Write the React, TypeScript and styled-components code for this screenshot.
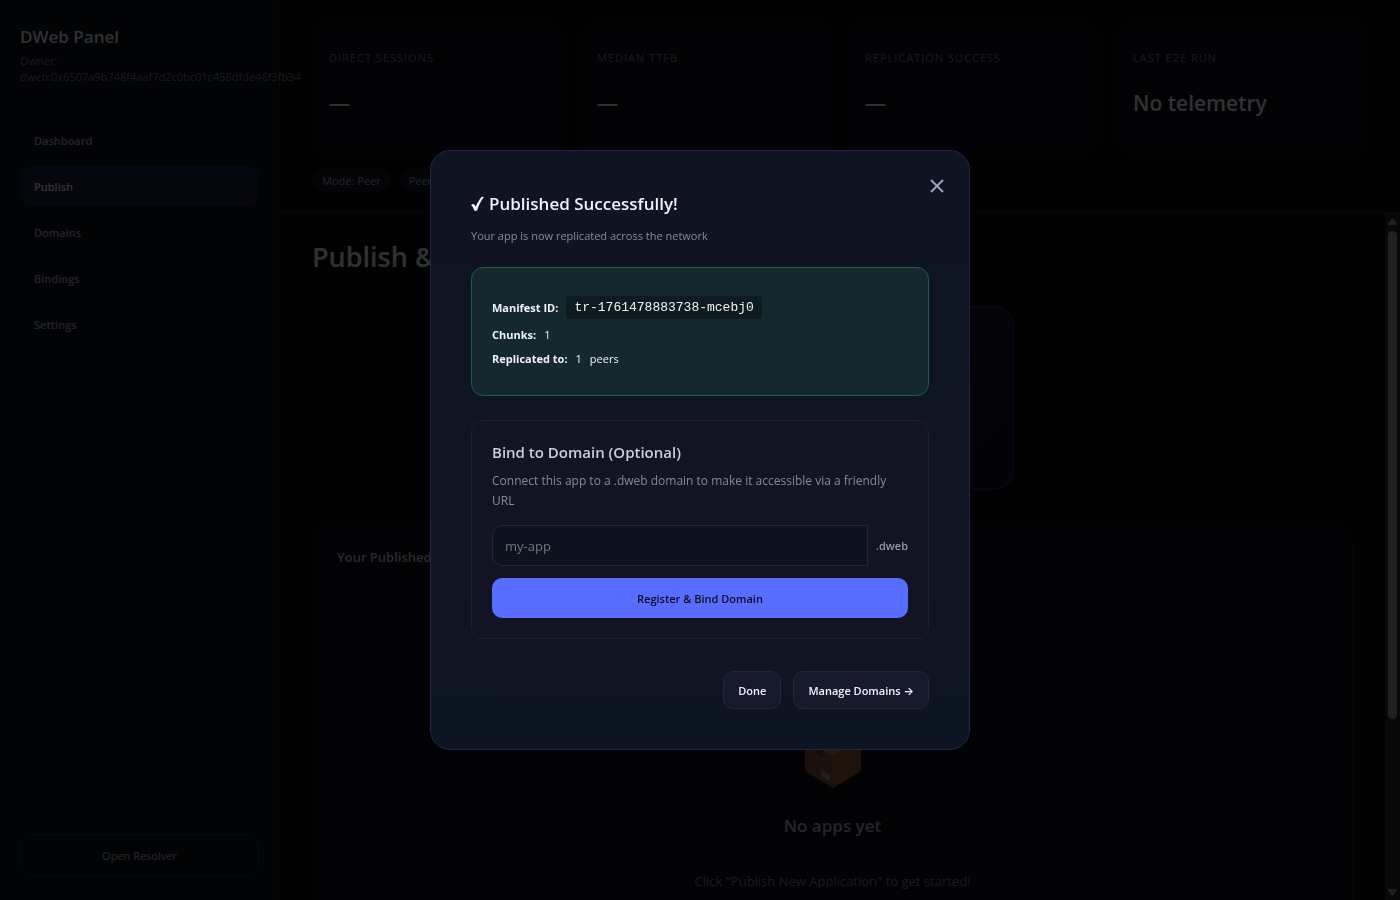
import React from 'react';
import styled, { createGlobalStyle } from 'styled-components';

const GlobalStyle = createGlobalStyle`
  *, *::before, *::after { box-sizing: border-box; }
  body {
    margin: 0;
    background: #05050a;
    color: #f0f2fa;
    font-family: 'Open Sans', 'Noto Sans', sans-serif;
    font-size: 11px;
  }
  h1, h2, h3, p, dl, dd, dt { margin: 0; }
  button, input { font-family: inherit; }
`;

const Shell = styled.div`
  display: flex;
  height: 100vh;
  overflow: hidden;
`;

const Sidebar = styled.aside`
  display: flex;
  flex-direction: column;
  flex: 0 0 280px;
  min-width: 0;
  padding: 24px 20px;
  background: #0a0f19;
  border-right: 1px solid #1b1e2b;
`;

const Brand = styled.h2`
  font-size: 17px;
  line-height: 26px;
  font-weight: 600;
`;

const Owner = styled.p`
  margin-top: 3px;
  font-size: 11px;
  line-height: 16px;
  color: #82869c;
  white-space: nowrap;
  position: relative;
  z-index: 1;
`;

const Nav = styled.nav`
  display: flex;
  flex-direction: column;
  gap: 6px;
  margin-top: 35px;
`;

const NavItem = styled.a<{ $active?: boolean }>`
  padding: 1px 14px 0;
  border-radius: 12px;
  font-size: 11px;
  line-height: 39px;
  font-weight: 600;
  text-decoration: none;
  color: ${(p) => (p.$active ? '#eef0fa' : '#b4b8ca')};
  background: ${(p) => (p.$active ? '#1f1f4a' : 'transparent')};
`;

const ResolverButton = styled.button`
  height: 42px;
  margin-top: auto;
  border: 1px solid #282e42;
  border-radius: 12px;
  background: transparent;
  color: #c5c9da;
  font-size: 11px;
`;

const Main = styled.main`
  display: flex;
  flex-direction: column;
  flex: 1;
  min-width: 0;
`;

const TopBar = styled.header`
  padding: 20px 32px;
  border-bottom: 1px solid #1b1e2b;
`;

const Stats = styled.div`
  display: grid;
  grid-template-columns: repeat(4, minmax(0, 1fr));
  gap: 16px;
`;

const StatCard = styled.section`
  height: 136px;
  padding: 28px 16px;
  border: 1px solid #171b28;
  border-radius: 16px;
  background: #0a0d1a;
`;

const StatLabel = styled.h3`
  font-size: 11px;
  line-height: 18px;
  font-weight: 400;
  letter-spacing: 1px;
  text-transform: uppercase;
  color: #82869c;
`;

const StatValue = styled.p`
  margin-top: 20px;
  font-size: 21px;
  line-height: 32px;
  font-weight: 600;
`;

const Pills = styled.div`
  display: flex;
  gap: 8px;
  margin-top: 12px;
`;

const Pill = styled.span`
  padding: 1px 10px 0;
  border-radius: 12px;
  line-height: 23px;
  background: #10141f;
  color: #b4b8ca;
`;

const Scroller = styled.div`
  display: flex;
  flex: 1;
  min-height: 0;
`;

const Content = styled.div`
  flex: 1;
  min-width: 0;
  padding: 24px 32px;
  overflow: hidden;
`;

const PageTitle = styled.h1`
  font-size: 27px;
  line-height: 40px;
  font-weight: 600;
`;

const UploadCard = styled.section`
  width: 363px;
  height: 184px;
  margin: 29px auto 32px;
  border: 2px solid #1e2350;
  border-radius: 20px;
  background: linear-gradient(135deg, #0f1330, #0f1126);
`;

const AppsPanel = styled.section`
  height: 480px;
  padding: 24px;
  border: 1px solid #171b28;
  border-radius: 20px;
  background: #0a0d18;
`;

const PanelTitle = styled.h2`
  font-size: 13px;
  line-height: 20px;
  font-weight: 600;
  color: #c9cddb;
`;

const Empty = styled.div`
  display: flex;
  flex-direction: column;
  align-items: center;
  margin-top: 157px;
`;

const EmptyTitle = styled.h3`
  margin-top: 26px;
  font-size: 17px;
  line-height: 24px;
  font-weight: 600;
  color: #b4b8ca;
`;

const EmptyText = styled.p`
  margin-top: 33px;
  font-size: 13px;
  line-height: 20px;
  color: #82869c;
`;

const ScrollTrack = styled.div`
  display: flex;
  flex-direction: column;
  align-items: center;
  flex: 0 0 15px;
  padding: 5px 0 4px;
  background: #2b2b2b;
`;

const ScrollThumb = styled.div`
  width: 9px;
  height: 72%;
  margin: 6px 0 auto;
  border-radius: 5px;
  background: #9f9f9f;
`;

const Backdrop = styled.div`
  position: fixed;
  inset: 0;
  z-index: 10;
  display: flex;
  align-items: center;
  justify-content: center;
  background: rgba(0, 0, 0, 0.8);
`;

const Dialog = styled.section`
  position: relative;
  width: 540px;
  max-width: 90%;
  padding: 40px;
  border: 1px solid #20273f;
  border-radius: 20px;
  background: linear-gradient(180deg, #101422, #0e1522);
`;

const CloseButton = styled.button`
  position: absolute;
  top: 23px;
  right: 20px;
  display: flex;
  padding: 5px;
  border: 0;
  background: none;
  color: #9ca1b8;
`;

const DialogTitle = styled.h2`
  display: flex;
  align-items: center;
  gap: 5px;
  font-size: 17px;
  line-height: 26px;
  font-weight: 600;
`;

const DialogText = styled.p`
  margin: 10px 0 22px;
  font-size: 11px;
  line-height: 18px;
  color: #8589a0;
`;

const Receipt = styled.dl`
  padding: 28px 20px 24px;
  border: 1px solid #1d5f45;
  border-radius: 12px;
  background: #14282d;
`;

const ReceiptRow = styled.div`
  display: flex;
  align-items: center;
  gap: 8px;
  line-height: 24px;

  &:first-child {
    margin-bottom: 4px;
    line-height: 23px;
  }
`;

const Term = styled.dt`
  font-weight: 700;
`;

const ManifestId = styled.code`
  display: block;
  padding: 0 8px;
  border-radius: 4px;
  background: #0e1c20;
  font-family: 'Liberation Mono', monospace;
  font-size: 13px;
`;

const BindCard = styled.form`
  margin-top: 24px;
  padding: 20px;
  border: 1px solid #1c2034;
  border-radius: 12px;
  background: #121423;
`;

const BindTitle = styled.h3`
  font-size: 15px;
  line-height: 22px;
  font-weight: 600;
  color: #c9cee0;
`;

const BindText = styled.p`
  margin: 8px 0 14px;
  font-size: 12px;
  line-height: 20px;
  color: #8589a0;
`;

const DomainRow = styled.div`
  display: flex;
  align-items: center;
  gap: 8px;
`;

const DomainInput = styled.input`
  flex: 1;
  min-width: 0;
  height: 41px;
  padding: 0 12px;
  border: 1px solid #20273c;
  border-radius: 10px 0 0 10px;
  background: #0c121e;
  color: #f0f2fa;
  font-size: 13px;

  &::placeholder { color: #757575; }
`;

const Suffix = styled.label`
  font-weight: 600;
  color: #9297ad;
`;

const PrimaryButton = styled.button`
  width: 100%;
  height: 40px;
  margin-top: 12px;
  border: 0;
  border-radius: 10px;
  background: #586cff;
  color: #0a0d1a;
  font-size: 11px;
  font-weight: 600;
`;

const Actions = styled.div`
  display: flex;
  justify-content: flex-end;
  gap: 12px;
  margin-top: 32px;
`;

const GhostButton = styled.button`
  height: 38px;
  padding: 0 14px;
  border: 1px solid #23283d;
  border-radius: 10px;
  background: #171a2c;
  color: #f0f2fa;
  font-family: 'Open Sans', Inter, sans-serif;
  font-size: 11px;
  font-weight: 600;
`;

const navItems = ['Dashboard', 'Publish', 'Domains', 'Bindings', 'Settings'];

const stats = [
  { label: 'Direct Sessions', value: '—' },
  { label: 'Median TTFB', value: '—' },
  { label: 'Replication Success', value: '—' },
  { label: 'Last E2E Run', value: 'No telemetry' },
];

const BoxIcon = () => (
  <svg width="56" height="64" viewBox="0 0 56 64" aria-hidden="true">
    <path d="M0 16 28 1l28 15-28 17z" fill="#a87c4c" />
    <path d="M0 16l28 17v31L0 47z" fill="#85543f" />
    <path d="M56 16 28 33v31l28-17z" fill="#94623a" />
    <path d="M10 20 38 6l7 4-27 15z" fill="#b98f5c" />
    <path d="M10 20l8 5v9l-8-5z" fill="#603a34" />
    <path d="M16 46l9 5v6l-9-5z" fill="#a8909a" />
  </svg>
);

const CheckIcon = () => (
  <svg width="13" height="16" viewBox="0 0 13 16" aria-hidden="true">
    <path
      d="M0 9.200c1.200-1.300 2.900-1.500 3.600-.4l1.100 2C6.400 6.800 8.400 3.200 10.800.8L13 1C9.900 5 7.500 9.700 6.200 14.200c-.8 1.100-2.600 1.100-3.100 0C2.300 11.700 1.500 10 0 9.200z"
      fill="currentColor"
    />
  </svg>
);

export default function App() {
  return (
    <>
      <GlobalStyle />
      <Shell>
        <Sidebar>
          <Brand>DWeb Panel</Brand>
          <Owner>
            Owner:
            <br />
            dweb:0x6507a9b748f4aaf7d2c0bc01c456dfde46f3fb34
          </Owner>
          <Nav>
            {navItems.map((item) => (
              <NavItem key={item} href={`#${item.toLowerCase()}`} $active={item === 'Publish'}>
                {item}
              </NavItem>
            ))}
          </Nav>
          <ResolverButton type="button">Open Resolver</ResolverButton>
        </Sidebar>
        <Main>
          <TopBar>
            <Stats>
              {stats.map((s) => (
                <StatCard key={s.label}>
                  <StatLabel>{s.label}</StatLabel>
                  <StatValue>{s.value}</StatValue>
                </StatCard>
              ))}
            </Stats>
            <Pills>
              <Pill>Mode: Peer</Pill>
              <Pill>Peers</Pill>
            </Pills>
          </TopBar>
          <Scroller>
            <Content>
              <PageTitle>Publish &amp;</PageTitle>
              <UploadCard />
              <AppsPanel>
                <PanelTitle>Your Published</PanelTitle>
                <Empty>
                  <BoxIcon />
                  <EmptyTitle>No apps yet</EmptyTitle>
                  <EmptyText>Click "Publish New Application" to get started!</EmptyText>
                </Empty>
              </AppsPanel>
            </Content>
            <ScrollTrack>
              <svg width="9" height="7" viewBox="0 0 9 7" aria-hidden="true">
                <path d="M4.500 0 9 5.500V7H0V5.500z" fill="#9f9f9f" />
              </svg>
              <ScrollThumb />
              <svg width="9" height="7" viewBox="0 0 9 7" aria-hidden="true">
                <path d="M4.500 7 9 1.500V0H0v1.500z" fill="#9f9f9f" />
              </svg>
            </ScrollTrack>
          </Scroller>
        </Main>
      </Shell>
      <Backdrop>
        <Dialog role="dialog" aria-modal="true" aria-labelledby="dialog-title">
          <CloseButton type="button" aria-label="Close">
            <svg width="14" height="14" viewBox="0 0 14 14" aria-hidden="true">
              <path d="M1 1l12 12M13 1 1 13" stroke="currentColor" strokeWidth="2" />
            </svg>
          </CloseButton>
          <DialogTitle id="dialog-title">
            <CheckIcon />
            Published Successfully!
          </DialogTitle>
          <DialogText>Your app is now replicated across the network</DialogText>
          <Receipt>
            <ReceiptRow>
              <Term>Manifest ID:</Term>
              <dd><ManifestId>tr-1761478883738-mcebj0</ManifestId></dd>
            </ReceiptRow>
            <ReceiptRow>
              <Term>Chunks:</Term>
              <dd>1</dd>
            </ReceiptRow>
            <ReceiptRow>
              <Term>Replicated to:</Term>
              <dd>1</dd>
              <dd>peers</dd>
            </ReceiptRow>
          </Receipt>
          <BindCard>
            <BindTitle>Bind to Domain (Optional)</BindTitle>
            <BindText>Connect this app to a .dweb domain to make it accessible via a friendly URL</BindText>
            <DomainRow>
              <DomainInput id="domain" type="text" placeholder="my-app" />
              <Suffix htmlFor="domain">.dweb</Suffix>
            </DomainRow>
            <PrimaryButton type="button">Register &amp; Bind Domain</PrimaryButton>
          </BindCard>
          <Actions>
            <GhostButton type="button">Done</GhostButton>
            <GhostButton type="button">Manage Domains →</GhostButton>
          </Actions>
        </Dialog>
      </Backdrop>
    </>
  );
}
